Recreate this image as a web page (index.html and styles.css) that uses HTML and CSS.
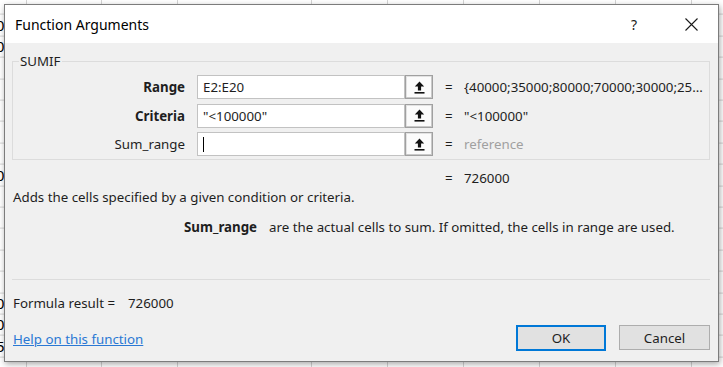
FILE: index.html
```html
<!DOCTYPE html>
<html>
<head>
<title>Function Arguments</title>
<link rel="stylesheet" href="styles.css">
</head>
<body>
<div class='sheet'>
	<div class='col-a'>
		<div class='cell'>0</div>
		<div class='cell'>0</div>
		<div class='cell'></div>
		<div class='cell'></div>
		<div class='cell'></div>
		<div class='cell'></div>
		<div class='cell'></div>
		<div class='cell'>0</div>
		<div class='cell'></div>
		<div class='cell'></div>
		<div class='cell'></div>
		<div class='cell'></div>
		<div class='cell'></div>
		<div class='cell'>0</div>
		<div class='cell'>0</div>
		<div class='cell'>5</div>
	</div>
</div>

<div class='dialog'>
	<div class='titlebar'>
		<span class='title'>Function Arguments</span>
		<span class='tb-btn'>?</span>
		<span class='tb-btn'>
			<svg width='13' height='13' viewBox='0 0 13 13'><path d='M0.5 0.5 L12.5 12.5 M12.5 0.5 L0.5 12.5' stroke='#1a1a1a' stroke-width='1.1' fill='none'/></svg>
		</span>
	</div>

	<div class='body'>
		<fieldset class='args'>
			<legend>SUMIF</legend>
			<div class='arg-list'>
				<div class='arg-row'>
					<span class='arg-name req'>Range</span>
					<div class='field'>
						<div class='input'>E2:E20</div>
						<span class='ref-btn'><svg width='11' height='13' viewBox='0 0 11 13'><path d='M5.5 0.5 L0.8 5.6 H3.9 V9.6 H7.1 V5.6 H10.2 Z' fill='#111'/><rect x='0.5' y='11' width='10' height='1.6' fill='#111'/></svg></span>
					</div>
					<span class='eq'>=</span>
					<span class='val'>{40000;35000;80000;70000;30000;25...</span>
				</div>
				<div class='arg-row'>
					<span class='arg-name req'>Criteria</span>
					<div class='field'>
						<div class='input'>"&lt;100000"</div>
						<span class='ref-btn'><svg width='11' height='13' viewBox='0 0 11 13'><path d='M5.5 0.5 L0.8 5.6 H3.9 V9.6 H7.1 V5.6 H10.2 Z' fill='#111'/><rect x='0.5' y='11' width='10' height='1.6' fill='#111'/></svg></span>
					</div>
					<span class='eq'>=</span>
					<span class='val'>"&lt;100000"</span>
				</div>
				<div class='arg-row'>
					<span class='arg-name'>Sum_range</span>
					<div class='field'>
						<div class='input'><span class='caret'></span></div>
						<span class='ref-btn'><svg width='11' height='13' viewBox='0 0 11 13'><path d='M5.5 0.5 L0.8 5.6 H3.9 V9.6 H7.1 V5.6 H10.2 Z' fill='#111'/><rect x='0.5' y='11' width='10' height='1.6' fill='#111'/></svg></span>
					</div>
					<span class='eq'>=</span>
					<span class='val muted'>reference</span>
				</div>
			</div>
		</fieldset>

		<div class='arg-row result-row'>
			<span></span>
			<span></span>
			<span class='eq'>=</span>
			<span class='val'>726000</span>
		</div>

		<p class='desc'>Adds the cells specified by a given condition or criteria.</p>
		<p class='arg-help'><b>Sum_range</b><span>are the actual cells to sum. If omitted, the cells in range are used.</span></p>

		<div class='sep'></div>

		<div class='footer'>
			<div class='footer-left'>
				<div class='formula'><span class='formula-label'>Formula result =</span><span>726000</span></div>
				<a class='help-link' href='#'>Help on this function</a>
			</div>
			<div class='buttons'>
				<button class='btn btn-ok'>OK</button>
				<button class='btn'>Cancel</button>
			</div>
		</div>
	</div>
</div>
</body>
</html>
```

FILE: styles.css
```css
body {
	margin: 0;
	width: 723px;
	height: 367px;
	overflow: hidden;
	position: relative;
	background: #fff;
	font-family: "Noto Sans", "Open Sans", sans-serif;
}

/* spreadsheet behind the dialog */
.sheet {
	width: 723px;
	height: 367px;
	background-image:
		linear-gradient(to right,
			transparent 26px, #d4d4d4 26px 27px,
			transparent 27px 101px, #d4d4d4 101px 102px,
			transparent 102px 177px, #d4d4d4 177px 178px,
			transparent 178px 311px, #d4d4d4 311px 312px,
			transparent 312px 387px, #d4d4d4 387px 388px,
			transparent 388px 463px, #d4d4d4 463px 464px,
			transparent 464px 539px, #d4d4d4 539px 540px,
			transparent 540px 615px, #d4d4d4 615px 616px,
			transparent 616px 691px, #d4d4d4 691px 692px,
			transparent 692px),
		repeating-linear-gradient(to bottom, transparent 0 20.4px, #d4d4d4 20.4px 21.4px);
	background-position: 0 0, 0 -6.4px;
}
/* only the sliver of column A left of the dialog is visible */
.col-a {
	width: 5px;
	padding-top: 15px;
	overflow: hidden;
	font-family: "Liberation Sans", sans-serif;
	font-size: 15px;
	color: #000;
}
.cell {
	height: 21.4px;
	line-height: 22px;
	margin-left: -4px;
}

/* dialog window */
.dialog {
	position: absolute;
	left: 4px;
	top: 4px;
	width: 715px;
	height: 358px;
	box-sizing: border-box;
	border: 1px solid #7c7c7c;
	background: #f0f0f0;
	box-shadow: 1px 2px 6px rgba(0,0,0,0.35);
	display: flex;
	flex-direction: column;
	font-size: 13.3px;
	color: #1e1e1e;
}

.titlebar {
	height: 38px;
	flex: none;
	background: #fff;
	display: flex;
	align-items: center;
	padding: 0 5px 0 10px;
}
.title {
	flex: 1;
	font-size: 14px;
	color: #000;
}
.tb-btn {
	width: 44px;
	height: 38px;
	display: flex;
	align-items: center;
	justify-content: center;
	font-size: 14px;
	color: #1a1a1a;
}
.tb-btn + .tb-btn {
	margin-left: 13px;
}

.body {
	padding: 10px 8px 0 7px;
}

.args {
	margin: 0;
	padding: 6px 0 3px 0;
	border: 1px solid #dcdcdc;
}
.args legend {
	margin-left: 6px;
	padding: 0 1px;
	line-height: 16px;
	font-size: 13.3px;
}
.arg-list {
	display: flex;
	flex-direction: column;
	gap: 4.5px;
}
.arg-row {
	display: grid;
	grid-template-columns: 172px 236px 7px 1fr;
	column-gap: 12px;
	height: 24px;
	align-items: center;
	white-space: nowrap;
}
.arg-name {
	text-align: right;
}
.req {
	font-weight: bold;
}
.field {
	display: flex;
	height: 24px;
}
.input {
	flex: 1;
	box-sizing: border-box;
	background: #fff;
	border: 1px solid #c2c2c2;
	padding-left: 5px;
	line-height: 22px;
	display: flex;
	align-items: center;
}
.caret {
	width: 1px;
	height: 15px;
	background: #000;
}
.ref-btn {
	width: 28px;
	box-sizing: border-box;
	border: 1px solid #a0a0a0;
	background: #fbfbfb;
	box-shadow: inset -1px -1px 0 #c9c9c9, inset 1px 1px 0 #e2e2e2;
	display: flex;
	align-items: center;
	justify-content: center;
}
.val {
	overflow: hidden;
}
.muted {
	color: #a0a0a0;
}

.result-row {
	margin-top: 9px;
	padding-left: 1px;
	height: 16px;
}

.desc {
	margin: 4px 0 0 1px;
	line-height: 16px;
}
.arg-help {
	margin: 14px 0 0 172px;
	line-height: 16px;
	display: flex;
	gap: 12px;
	white-space: nowrap;
}

.sep {
	margin-top: 44px;
	height: 1px;
	background: #dcdcdc;
}

.footer {
	margin-top: 15px;
	display: flex;
	justify-content: space-between;
	align-items: flex-start;
}
.formula {
	display: flex;
	line-height: 16px;
	padding-left: 1px;
	white-space: nowrap;
}
.formula-label {
	width: 115px;
}
.help-link {
	display: block;
	margin: 20px 0 0 1px;
	line-height: 16px;
	color: #2a78d4;
}
.buttons {
	margin-top: 30px;
	display: flex;
	gap: 13px;
	align-items: flex-start;
}
.btn {
	width: 91px;
	height: 25px;
	box-sizing: border-box;
	border: 1px solid #adadad;
	background: #e1e1e1;
	font-family: inherit;
	font-size: 13.3px;
	color: #1e1e1e;
	padding: 0;
}
.btn-ok {
	width: 90px;
	height: 26px;
	border: 2px solid #0078d7;
}
```
